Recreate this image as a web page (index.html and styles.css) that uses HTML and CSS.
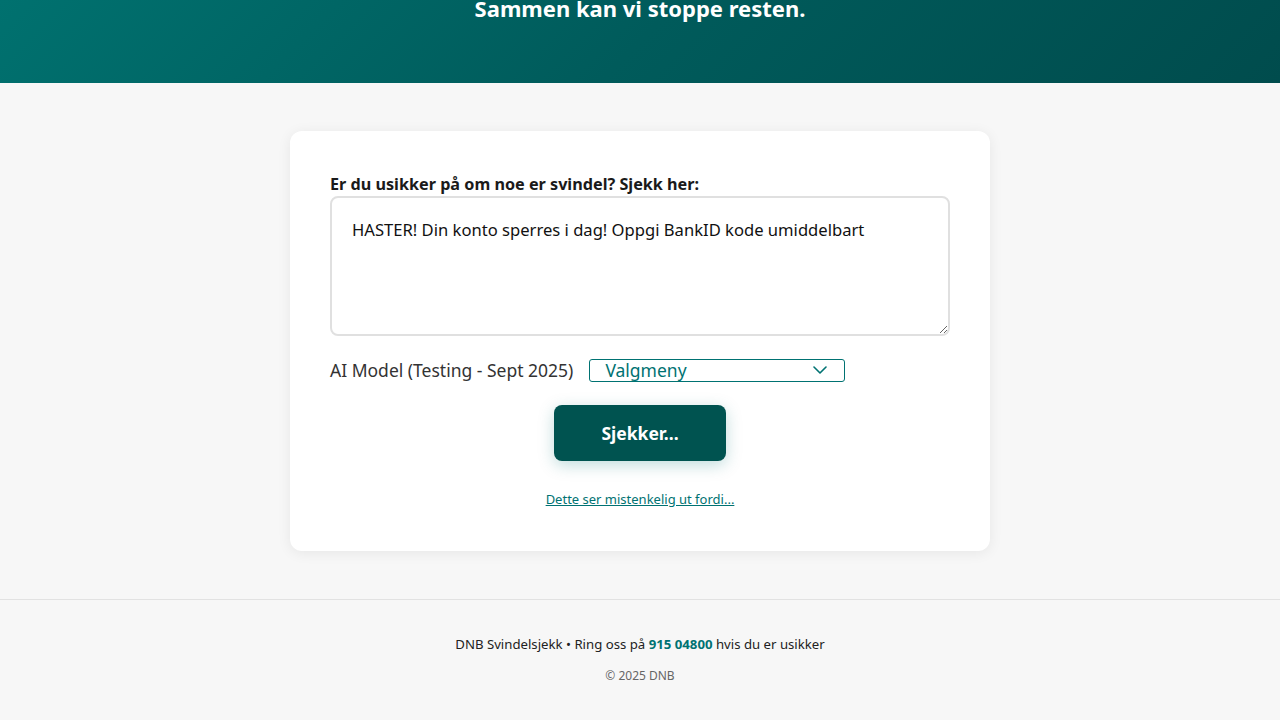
FILE: index.html
```html
<!DOCTYPE html>
<html lang="no">
<head>
<meta charset="utf-8">
<title>DNB Svindelsjekk</title>
<link rel="stylesheet" href="styles.css">
</head>
<body>
<header class="hero">
  <h1 class="hero-title">Sammen kan vi stoppe resten.</h1>
</header>
<main class="main">
  <section class="card">
    <label class="field-label" for="msg">Er du usikker på om noe er svindel? Sjekk her:</label>
    <textarea id="msg" class="message">HASTER! Din konto sperres i dag! Oppgi BankID kode umiddelbart</textarea>
    <div class="model-row">
      <span class="model-label">AI Model (Testing - Sept 2025)</span>
      <div class="select">
        <span class="select-text">Valgmeny</span>
        <svg class="chevron" width="14" height="8" viewBox="0 0 14 8"><path d="M1 1l6 6 6-6" fill="none" stroke="#007272" stroke-width="1.6" stroke-linecap="round" stroke-linejoin="round"/></svg>
      </div>
    </div>
    <div class="actions">
      <button class="check-btn">Sjekker...</button>
      <a class="reason-link" href="#">Dette ser mistenkelig ut fordi...</a>
    </div>
  </section>
</main>
<footer class="footer">
  <p class="footer-line">DNB Svindelsjekk • Ring oss på <strong class="phone">915 04800</strong> hvis du er usikker</p>
  <p class="copy">© 2025 DNB</p>
</footer>
</body>
</html>
```
FILE: styles.css
```css
* { box-sizing: border-box; }
html, body { margin: 0; padding: 0; }
body {
  background: #f7f7f7;
  font-family: "Noto Sans", "Liberation Sans", sans-serif;
  color: #1a1a1a;
}
.hero {
  height: 83px;
  background: linear-gradient(135deg, #00716f 0%, #005b5b 50%, #004c4d 100%);
  overflow: hidden;
  display: flex;
  justify-content: center;
}
.hero-title {
  margin: -6px 0 0;
  font-size: 22px;
  line-height: 28px;
  font-weight: 700;
  color: #fff;
}
.main {
  display: flex;
  justify-content: center;
  padding: 48px 0 48px;
}
.card {
  width: 700px;
  background: #fff;
  border-radius: 12px;
  box-shadow: 0 2px 14px rgba(0,0,0,0.07);
  padding: 40px 40px 43px;
  display: flex;
  flex-direction: column;
}
.field-label {
  font-size: 16.2px;
  line-height: 24px;
  font-weight: 700;
  color: #1a1a1a;
  margin-top: 1px;
}
.message {
  display: block;
  width: 620px;
  height: 140px;
  border: 2px solid #e0e0e0;
  border-radius: 8px;
  padding: 20px 20px;
  font-family: inherit;
  font-size: 16.6px;
  line-height: 24px;
  color: #111;
  resize: vertical;
  outline: none;
}
.model-row {
  display: flex;
  align-items: center;
  gap: 16px;
  margin-top: 22px;
}
.model-label {
  font-size: 17.5px;
  color: #333;
}
.select {
  width: 256px;
  height: 23px;
  border: 1px solid #007272;
  border-radius: 3px;
  display: flex;
  align-items: center;
  justify-content: space-between;
  padding: 0 17px 0 15px;
}
.select-text {
  color: #007272;
  font-size: 17.5px;
}
.actions {
  display: flex;
  flex-direction: column;
  align-items: center;
  margin-top: 23px;
}
.check-btn {
  width: 172px;
  height: 56px;
  border: none;
  border-radius: 8px;
  background: #005350;
  color: #fff;
  font-family: inherit;
  font-size: 17.5px;
  font-weight: 700;
  box-shadow: 0 4px 16px rgba(0,114,114,0.25);
}
.reason-link {
  margin-top: 29px;
  font-size: 13px;
  color: #007272;
  text-decoration: underline;
}
.footer {
  border-top: 1px solid #e2e2e2;
  text-align: center;
  padding: 35px 0 30px;
}
.footer-line {
  margin: 0;
  font-size: 13.2px;
  color: #222;
}
.phone { color: #007272; }
.copy {
  margin: 14px 0 0;
  font-size: 12px;
  color: #666;
}
```
